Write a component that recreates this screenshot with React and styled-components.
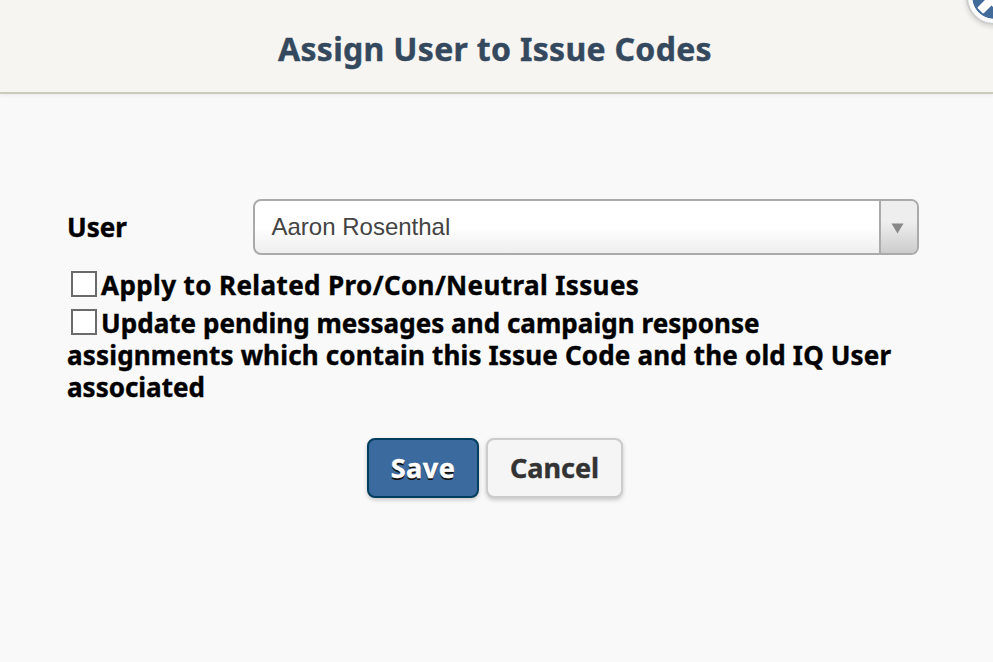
import React from "react";
import styled, { createGlobalStyle } from "styled-components";

const GlobalStyle = createGlobalStyle`
  * {
    box-sizing: border-box;
  }
  body {
    margin: 0;
    overflow: hidden;
    background: #f9f9f9;
    font-family: "Noto Sans", Tahoma, sans-serif;
  }
`;

const App = () => {
  return (
    <Dialog>
      <GlobalStyle />
      <Header>
        <Title>Assign User to Issue Codes</Title>
        <CloseButton aria-label="Close">
          <svg width="42" height="42" viewBox="0 0 42 42">
            <g fill="#fff" transform="translate(18.5 23.5) rotate(45)">
              <rect x="-16" y="-4.3" width="32" height="8.6" rx="1.5" />
              <rect x="-4.3" y="-16" width="8.6" height="32" rx="1.5" />
            </g>
          </svg>
        </CloseButton>
      </Header>
      <Form>
        <Field>
          <Label>User</Label>
          <Select>
            <Value>Aaron Rosenthal</Value>
            <Arrow>
              <svg width="13" height="11" viewBox="0 0 13 11">
                <path d="M0.5 0.5h12L6.5 10.5z" fill="#888" />
              </svg>
            </Arrow>
          </Select>
        </Field>
        <Option>
          <Checkbox type="checkbox" />
          <Text $ls="0.39px">Apply to Related Pro/Con/Neutral Issues</Text>
        </Option>
        <Option>
          <Checkbox type="checkbox" />
          <Text $ls="0.04px">Update pending messages and campaign response</Text>
          <br />
          <Text $ls="0.17px">
            assignments which contain this Issue Code and the old IQ User
          </Text>
          <br />
          <Text>associated</Text>
        </Option>
        <Actions>
          <Button $primary $wd="112px">
            <Text $ls="0.5px">Save</Text>
          </Button>
          <Button $wd="137px">
            <Text>Cancel</Text>
          </Button>
        </Actions>
      </Form>
    </Dialog>
  );
};

export default App;

const Dialog = styled.div`
  height: 662px;
  background: #f9f9f9;
`;

const Header = styled.header`
  position: relative;
  display: flex;
  justify-content: center;
  height: 94px;
  padding-top: 27px;
  background: #f7f5f1;
  border-bottom: 2px solid #cbcabd;
  box-shadow: 0 1px 4px rgba(0, 0, 0, 0.07);
`;

const Title = styled.h1`
  margin: 0 3px 0 0;
  color: #34495e;
  font-size: 32px;
  line-height: 44px;
  letter-spacing: 0.3px;
  white-space: nowrap;
  -webkit-text-stroke: 0.4px;
`;

const CloseButton = styled.button`
  position: absolute;
  top: -31px;
  right: -29px;
  display: flex;
  width: 56px;
  height: 56px;
  padding: 5px;
  border: 2px solid #ccc;
  border-radius: 50%;
  background: radial-gradient(circle, #426b9c 21.3px, #fafafa 22px);
  box-shadow: 0 2px 5px rgba(0, 0, 0, 0.15);
`;

const Form = styled.form`
  padding: 105px 66px 0 67px;
`;

const Field = styled.div`
  display: flex;
  align-items: center;
  margin-bottom: 12px;
`;

const Label = styled.label`
  width: 186px;
  font-size: 26px;
  font-weight: bold;
  -webkit-text-stroke: 0.4px;
`;

const Select = styled.div`
  display: flex;
  width: 666px;
  height: 56px;
  border: 2px solid #aaa;
  border-radius: 8px;
  overflow: hidden;
  background: linear-gradient(to top, #eee 0%, #fff 50%);
`;

const Value = styled.span`
  flex: 1;
  padding-left: 16.5px;
  color: #444;
  font: 24px/51px "Liberation Sans", Arial, sans-serif;
`;

const Arrow = styled.span`
  display: flex;
  justify-content: center;
  width: 38px;
  padding: 22px 3px 0 0;
  border-left: 2px solid #aaa;
  background: linear-gradient(to top, #ccc 0%, #eee 60%);
`;

const Option = styled.div`
  height: 38px;
  font-size: 26px;
  font-weight: bold;
  line-height: 32px;
  white-space: nowrap;
`;

const Checkbox = styled.input`
  appearance: none;
  width: 26px;
  height: 26px;
  margin: 4px 4px 0;
  border: 2px solid #6b6b6b;
  background: #fff;
  vertical-align: -2px;
`;

const Text = styled.span`
  letter-spacing: ${({ $ls }) => $ls || "0"};
  -webkit-text-stroke: 0.4px;
`;

const Actions = styled.div`
  display: flex;
  gap: 7px;
  margin-top: 95px;
  padding-left: 300px;
`;

const Button = styled.button`
  width: ${({ $wd }) => $wd};
  height: 60px;
  padding: 0 0 2px;
  border: 2px solid ${({ $primary }) => ($primary ? "#003d5e" : "#ccc")};
  border-radius: 8px;
  background: ${({ $primary }) => ($primary ? "#3a6a9e" : "#f5f5f5")};
  box-shadow: 0 2px 4px rgba(0, 0, 0, 0.2);
  color: ${({ $primary }) => ($primary ? "#fff" : "#333")};
  font-family: inherit;
  font-size: 27px;
  font-weight: bold;
  text-shadow: ${({ $primary }) => ($primary ? "0 2px 0 #111" : "none")};
`;
